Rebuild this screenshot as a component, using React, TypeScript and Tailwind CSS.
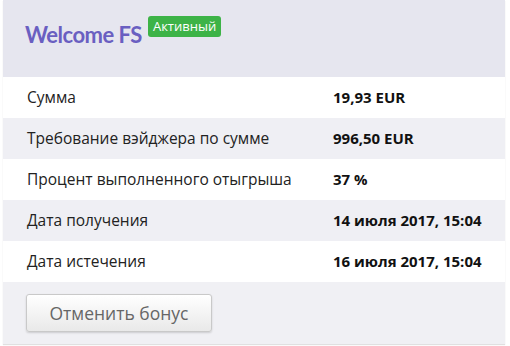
const rows = [
  { label: "Сумма", value: "19,93 EUR" },
  { label: "Требование вэйджера по сумме", value: "996,50 EUR" },
  { label: "Процент выполненного отыгрыша", value: "37 %" },
  { label: "Дата получения", value: "14 июля 2017, 15:04" },
  { label: "Дата истечения", value: "16 июля 2017, 15:04" },
]

export default function App() {
  return (
    <div className="w-[510px] h-[346px] bg-white pl-[3px] pr-[5px] font-['Open_Sans',sans-serif]">
      <div className="w-[502px] h-[344px] flex flex-col bg-[#f0f0f4] shadow-[0_1px_1px_rgba(0,0,0,0.12)]">
        <div className="h-[77px] shrink-0 bg-[#e6e6ef] pl-[22px] pt-[16px] flex items-start">
          <h2 className="mt-[5px] font-['Lato',sans-serif] text-[22px] font-bold text-[#6a5fc1] tracking-[-0.5px] leading-[28px]">
            Welcome FS
          </h2>
          <span className="ml-[6px] h-[21px] px-[5px] rounded-[3px] bg-[#3db347] text-white text-[13px] leading-[21px]">
            Активный
          </span>
        </div>
        {rows.map((r, i) => (
          <div
            key={r.label}
            className={`h-[41px] shrink-0 flex items-center pl-[24px] ${
              i % 2 === 0 ? "bg-white" : "bg-[#efeff4]"
            }`}
          >
            <span className="w-[306px] text-[15.5px] text-[#222]">{r.label}</span>
            <span className="text-[15px] font-bold text-[#111]">{r.value}</span>
          </div>
        ))}
        <div className="flex-1 pl-[23px] pt-[12px]">
          <button className="w-[186px] h-[38px] rounded-[3px] border border-[#c9c9c9] bg-linear-to-b from-white to-[#e9e9e9] shadow-[0_1px_2px_rgba(0,0,0,0.15)] text-[17.5px] text-[#666]">
            Отменить бонус
          </button>
        </div>
      </div>
    </div>
  )
}
